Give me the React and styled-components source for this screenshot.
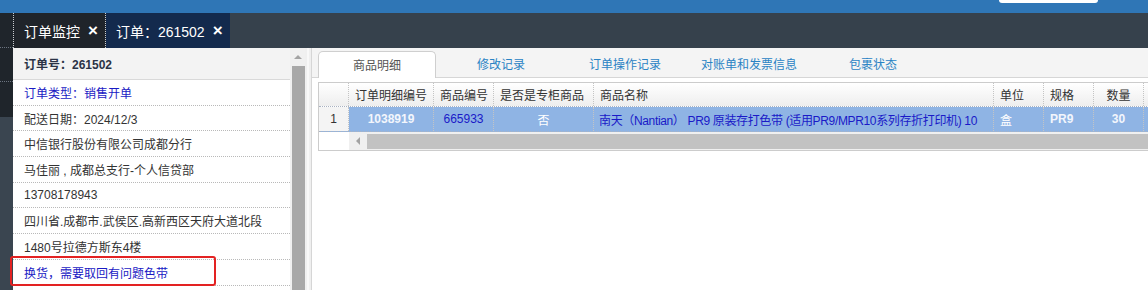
import React from "react";
import styled, { createGlobalStyle } from "styled-components";

const Global = createGlobalStyle`
  html, body { margin: 0; padding: 0; background: #fff; }
  body { font-family: "Liberation Sans", "Noto Sans CJK SC", sans-serif; font-size: 12px; }
  * { box-sizing: border-box; }
`;

const Page = styled.div`
  width: 1148px;
  height: 290px;
  overflow: hidden;
  display: flex;
  flex-direction: column;
`;

const TopBar = styled.div`
  height: 13px;
  flex: none;
  background: #2f76b6;
  display: flex;
  justify-content: flex-end;
  padding-right: 50px;
`;

const SearchStub = styled.div`
  width: 99px;
  height: 3px;
  background: #fff;
  border-radius: 0 0 3px 3px;
`;

const Shell = styled.div`
  flex: 1;
  display: flex;
  min-height: 0;
`;

const Rail = styled.div`
  width: 13px;
  flex: none;
  display: flex;
  flex-direction: column;
  background: #3a4550;
`;

const RailItem = styled.div`
  height: ${(p) => p.$h}px;
  background: #1f252b;
  border-bottom: ${(p) => (p.$line ? "1px dotted #6b7480" : "none")};
`;

const Main = styled.div`
  flex: 1;
  display: flex;
  flex-direction: column;
  min-width: 0;
`;

const TabStrip = styled.div`
  height: 35px;
  flex: none;
  background: #36414c;
  display: flex;
`;

const PageTab = styled.div`
  height: 35px;
  display: flex;
  align-items: center;
  gap: 8px;
  padding: 0 7px 0 10px;
  color: #fff;
  font-size: 14px;
  background: ${(p) => (p.$active ? "#132a4d" : "#1f242a")};
  border-left: ${(p) => (p.$active ? "none" : "1px dotted #c9ccd0")};
  border-right: ${(p) => (p.$active ? "none" : "1px dotted #c9ccd0")};
`;

const Close = styled.span`
  font-size: 17px;
  font-weight: bold;
  line-height: 1;
`;

const Content = styled.div`
  flex: 1;
  display: flex;
  min-height: 0;
`;

const InfoPanel = styled.div`
  width: 277px;
  flex: none;
  background: #fff;
  display: flex;
  flex-direction: column;
`;

const InfoHeader = styled.div`
  height: 32px;
  flex: none;
  background: #f3f3f3;
  border-bottom: 1px solid #d9d9d9;
  display: flex;
  align-items: center;
  padding-left: 11px;
  font-weight: bold;
  color: #2b3346;
`;

const InfoRow = styled.div`
  position: relative;
  height: 25.7px;
  flex: none;
  display: flex;
  align-items: center;
  padding-left: 11px;
  border-bottom: 1px dotted #b9b9b9;
  color: ${(p) => (p.$blue ? "#1a1ac4" : "#333")};
  white-space: nowrap;
`;

const Highlight = styled.div`
  position: absolute;
  left: -3px;
  top: -4px;
  width: 206px;
  height: 30px;
  border: 2px solid #e32222;
  border-radius: 3px;
  pointer-events: none;
`;

const VScroll = styled.div`
  width: 15px;
  flex: none;
  background: #f0f0f0;
  display: flex;
  flex-direction: column;
  align-items: flex-end;
`;

const ArrowBox = styled.div`
  height: 18px;
  width: 15px;
  display: flex;
  align-items: center;
  justify-content: center;
`;

const UpArrow = styled.div`
  width: 0;
  height: 0;
  border-left: 4px solid transparent;
  border-right: 4px solid transparent;
  border-bottom: 4px solid #a3a3a3;
`;

const LeftArrow = styled.div`
  width: 0;
  height: 0;
  border-top: 4px solid transparent;
  border-bottom: 4px solid transparent;
  border-right: 4px solid #a3a3a3;
`;

const VThumb = styled.div`
  width: 13px;
  flex: 1;
  background: #a8a8a8;
`;

const Splitter = styled.div`
  width: 7px;
  flex: none;
  background: #efefef;
  border-right: 1px solid #d6d6d6;
  display: flex;
  justify-content: flex-start;
  padding-left: 2px;
`;

const SplitLine = styled.div`
  width: 2px;
  background: #f8f8f8;
`;

const DetailPanel = styled.div`
  flex: 1;
  min-width: 0;
  background: #fff;
  display: flex;
  flex-direction: column;
  overflow: hidden;
`;

const TabBar = styled.div`
  height: 30px;
  flex: none;
  background: #f4f4f4;
  border-bottom: 1px solid #d6d6d6;
  display: flex;
  align-items: flex-end;
  gap: 6px;
  padding-left: 6px;
`;

const DetailTab = styled.div`
  width: 118px;
  height: ${(p) => (p.$active ? "27px" : "26px")};
  margin-bottom: ${(p) => (p.$active ? "-1px" : "0")};
  display: flex;
  align-items: center;
  justify-content: center;
  font-size: 12px;
  color: ${(p) => (p.$active ? "#555" : "#2a83c4")};
  background: ${(p) => (p.$active ? "#fff" : "transparent")};
  border: 1px solid ${(p) => (p.$active ? "#cfcfcf" : "transparent")};
  border-bottom: none;
  border-radius: 5px 5px 0 0;
  padding-bottom: 2px;
`;

const Grid = styled.div`
  margin: 4px 0 0 6px;
  width: 880px;
  border: 1px solid #cccccc;
  display: flex;
  flex-direction: column;
`;

const GridRow = styled.div`
  display: flex;
  height: ${(p) => p.$h}px;
  background: ${(p) =>
    p.$head
      ? "linear-gradient(#ffffff, #eeeeee)"
      : p.$selected
      ? "#8fb4e4"
      : "#fff"};
  border-bottom: 1px dotted #aab3c2;
`;

const Cell = styled.div`
  width: ${(p) => p.$w}px;
  flex: none;
  display: flex;
  align-items: center;
  justify-content: ${(p) => (p.$center ? "center" : "flex-start")};
  padding: 0 ${(p) => (p.$tight ? "4px 0 5px" : "6px")};
  border-right: 1px dotted #c4c4c4;
  color: ${(p) => p.$color || "#333"};
  font-weight: ${(p) => (p.$bold ? "bold" : "normal")};
  letter-spacing: ${(p) => (p.$tight ? "-0.35px" : "normal")};
  white-space: nowrap;
  overflow: hidden;
  text-overflow: clip;
  background: ${(p) => (p.$num ? "#f4f4f4" : "transparent")};
`;

const ScrollRow = styled.div`
  display: flex;
  height: 18px;
`;

const ScrollGap = styled.div`
  width: 30px;
  flex: none;
  background: #fff;
`;

const HTrack = styled.div`
  flex: 1;
  background: #f0f0f0;
  display: flex;
  align-items: center;
`;

const HArrowBox = styled.div`
  width: 18px;
  height: 18px;
  display: flex;
  align-items: center;
  justify-content: center;
`;

const HThumb = styled.div`
  flex: 1;
  height: 15px;
  background: #c2c2c2;
`;

const columns = [
  { key: "id", title: "订单明细编号", w: 85 },
  { key: "code", title: "商品编号", w: 60 },
  { key: "counter", title: "是否是专柜商品", w: 100 },
  { key: "name", title: "商品名称", w: 400 },
  { key: "unit", title: "单位", w: 50 },
  { key: "spec", title: "规格", w: 50 },
  { key: "qty", title: "数量", w: 50, center: true },
  { key: "more", title: "", w: 60 },
];

const row = {
  id: { v: "1038919", color: "#f3f6fc", bold: true, center: true },
  code: { v: "665933", color: "#1a1ac8", center: true },
  counter: { v: "否", color: "#ffffff", center: true },
  name: {
    v: "南天（Nantian） PR9 原装存打色带 (适用PR9/MPR10系列存折打印机) 10",
    color: "#1a1ac8",
    tight: true,
  },
  unit: { v: "盒", color: "#ffffff" },
  spec: { v: "PR9", color: "#f3f6fc", bold: true },
  qty: { v: "30", color: "#f3f6fc", bold: true, center: true },
  more: { v: "", color: "#fff" },
};

const info = [
  { t: "订单类型：销售开单", blue: true },
  { t: "配送日期：2024/12/3" },
  { t: "中信银行股份有限公司成都分行" },
  { t: "马佳丽 , 成都总支行-个人信贷部" },
  { t: "13708178943" },
  { t: "四川省.成都市.武侯区.高新西区天府大道北段" },
  { t: "1480号拉德方斯东4楼" },
  { t: "换货，需要取回有问题色带", blue: true, mark: true },
];

const tabs = ["商品明细", "修改记录", "订单操作记录", "对账单和发票信息", "包裹状态"];

export default function App() {
  return (
    <Page>
      <Global />
      <TopBar>
        <SearchStub />
      </TopBar>
      <Shell>
        <Rail>
          <RailItem $h={35} $line />
          <RailItem $h={34} $line />
          <RailItem $h={35} />
        </Rail>
        <Main>
          <TabStrip>
            <PageTab>
              订单监控 <Close>×</Close>
            </PageTab>
            <PageTab $active>
              订单：261502 <Close>×</Close>
            </PageTab>
          </TabStrip>
          <Content>
            <InfoPanel>
              <InfoHeader>订单号：261502</InfoHeader>
              {info.map((r) => (
                <InfoRow key={r.t} $blue={r.blue}>
                  {r.t}
                  {r.mark && <Highlight />}
                </InfoRow>
              ))}
            </InfoPanel>
            <VScroll>
              <ArrowBox>
                <UpArrow />
              </ArrowBox>
              <VThumb />
            </VScroll>
            <Splitter>
              <SplitLine />
            </Splitter>
            <DetailPanel>
              <TabBar>
                {tabs.map((t, i) => (
                  <DetailTab key={t} $active={i === 0}>
                    {t}
                  </DetailTab>
                ))}
              </TabBar>
              <Grid>
                <GridRow $head $h={24}>
                  <Cell $w={30} />
                  {columns.map((c) => (
                    <Cell key={c.key} $w={c.w} $center={c.center}>
                      {c.title}
                    </Cell>
                  ))}
                </GridRow>
                <GridRow $selected $h={25}>
                  <Cell $w={30} $num $center>
                    1
                  </Cell>
                  {columns.map((c) => {
                    const d = row[c.key];
                    return (
                      <Cell
                        key={c.key}
                        $w={c.w}
                        $center={d.center}
                        $color={d.color}
                        $bold={d.bold}
                        $tight={d.tight}
                      >
                        {d.v}
                      </Cell>
                    );
                  })}
                </GridRow>
                <ScrollRow>
                  <ScrollGap />
                  <HTrack>
                    <HArrowBox>
                      <LeftArrow />
                    </HArrowBox>
                    <HThumb />
                  </HTrack>
                </ScrollRow>
              </Grid>
            </DetailPanel>
          </Content>
        </Main>
      </Shell>
    </Page>
  );
}
